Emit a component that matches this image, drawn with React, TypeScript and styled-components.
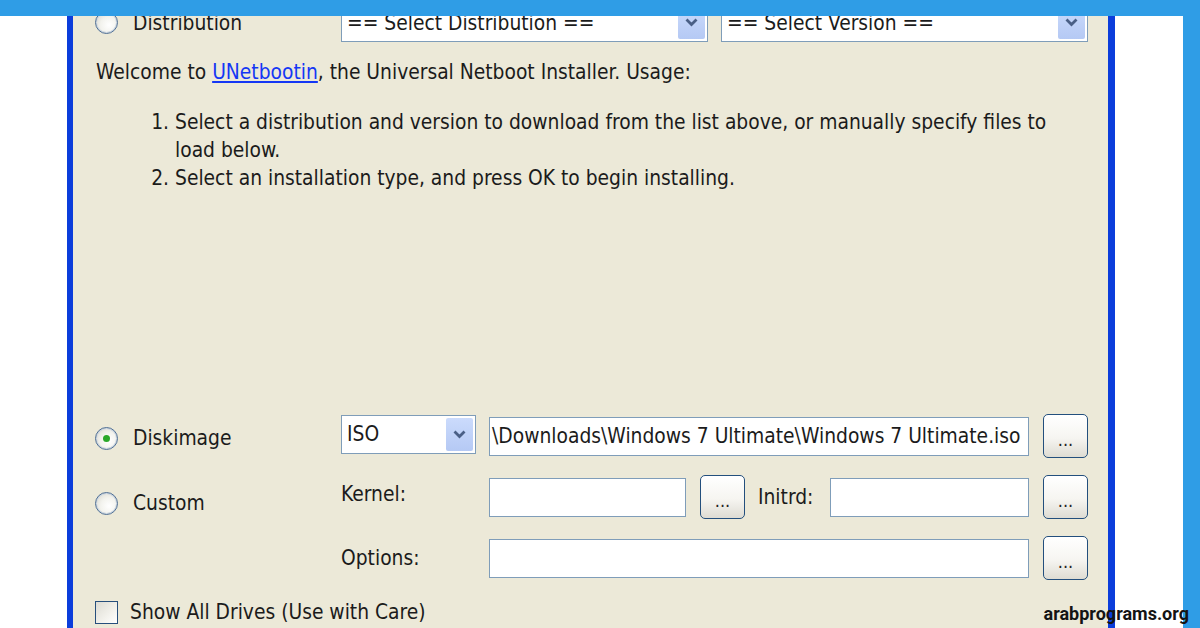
import React from "react";
import styled, { createGlobalStyle } from "styled-components";

const UI_FONT = `"DejaVu Sans Condensed", "DejaVu Sans", sans-serif`;

const Global = createGlobalStyle`
  html, body { margin: 0; padding: 0; background: #ffffff; }
  body { width: 1200px; height: 628px; overflow: hidden; }
`;

const Page = styled.div`
  position: relative;
  width: 1200px;
  height: 628px;
  display: flex;
  flex-direction: column;
  background: #ffffff;
  overflow: hidden;
`;

const TopBand = styled.div`
  flex: none;
  height: 16px;
  background: #2f9de6;
`;

const Stage = styled.div`
  flex: 1;
  min-height: 0;
  display: flex;
`;

const Gutter = styled.div<{ $w: number }>`
  flex: none;
  width: ${(p) => p.$w}px;
  background: #ffffff;
`;

const SideBand = styled.div`
  flex: none;
  width: 17px;
  background: #2f9de6;
`;

const Window = styled.div`
  flex: none;
  width: 1048px;
  box-sizing: border-box;
  border-left: 6px solid #0b3ddb;
  border-right: 7px solid #0b3ddb;
  background: #ece9d8;
  padding: 0 20px 0 22px;
  overflow: hidden;
  font-family: ${UI_FONT};
  font-stretch: condensed;
  font-size: 20.8px;
  color: #1b1b1b;
`;

const TopRow = styled.div`
  margin-top: -13px;
  display: grid;
  grid-template-columns: 233px 367px 367px;
  column-gap: 13px;
  align-items: center;
  height: 39px;
`;

const Choice = styled.label<{ $dy?: number }>`
  display: flex;
  align-items: center;
  gap: 15px;
  white-space: nowrap;
  padding-top: ${(p) => Math.max(0, p.$dy ?? 0)}px;
  padding-bottom: ${(p) => Math.max(0, -(p.$dy ?? 0))}px;
`;

const Radio = styled.span<{ $on?: boolean }>`
  flex: none;
  width: 23px;
  height: 23px;
  box-sizing: border-box;
  border-radius: 50%;
  border: 1.5px solid #4f6f95;
  box-shadow: inset 0 0 0 1px #c9d4df;
  background: radial-gradient(circle at 62% 62%, #ffffff 0%, #f3f3ee 45%, #d3d1c8 100%);
  display: flex;
  align-items: center;
  justify-content: center;
  &::after {
    content: "";
    display: ${(p) => (p.$on ? "block" : "none")};
    width: 7px;
    height: 7px;
    border-radius: 50%;
    background: #2aa82a;
  }
`;

const Check = styled.span`
  flex: none;
  width: 23px;
  height: 23px;
  box-sizing: border-box;
  border: 1.5px solid #274f7c;
  background: linear-gradient(135deg, #dcdbd3 0%, #f1f0ea 55%, #ffffff 100%);
`;

const Combo = styled.div<{ $w?: number; $dy?: number }>`
  height: 39px;
  ${(p) => (p.$w ? `width: ${p.$w}px;` : "")}
  box-sizing: border-box;
  border: 1px solid #7f9db9;
  background: #ffffff;
  padding: 2px;
  display: flex;
  align-items: center;
  margin-top: ${(p) => p.$dy ?? 0}px;
`;

const ComboText = styled.span`
  flex: 1;
  padding-left: 3px;
  white-space: nowrap;
  overflow: hidden;
`;

const ComboButton = styled.span`
  flex: none;
  width: 27px;
  align-self: stretch;
  border-radius: 2px;
  background: linear-gradient(#cbdbfc, #b5c9f4);
  display: flex;
  align-items: center;
  justify-content: center;
`;

const Welcome = styled.p`
  margin: 16px 0 0 1px;
  line-height: 28px;
  white-space: nowrap;
`;

const Link = styled.a`
  color: #1437f5;
  text-decoration: underline;
`;

const Steps = styled.ol`
  margin: 22px 0 0;
  padding-left: 80px;
  line-height: 28px;
  white-space: nowrap;
`;

const Form = styled.div`
  margin-top: 222px;
  display: grid;
  grid-template-columns: 246px 148px 540px 59px;
  grid-auto-rows: 44px;
  row-gap: 17px;
  align-items: center;
`;

const FieldLabel = styled.span<{ $dy?: number }>`
  white-space: nowrap;
  padding-top: ${(p) => Math.max(0, p.$dy ?? 0)}px;
  padding-bottom: ${(p) => Math.max(0, -(p.$dy ?? 0))}px;
`;

const Field = styled.div<{ $w?: number }>`
  height: 39px;
  ${(p) => (p.$w ? `width: ${p.$w}px; flex: none;` : "flex: 1;")}
  box-sizing: border-box;
  border: 1px solid #7f9db9;
  background: #ffffff;
  display: flex;
  align-items: center;
  padding: 0 2px;
  overflow: hidden;
  white-space: nowrap;
`;

const SplitCell = styled.div`
  display: flex;
  align-items: center;
`;

const InlineLabel = styled.span`
  flex: none;
  width: 72px;
  margin-left: 13px;
  white-space: nowrap;
`;

const Browse = styled.button<{ $gap?: number }>`
  flex: none;
  justify-self: end;
  width: 45px;
  height: 44px;
  margin-left: ${(p) => p.$gap ?? 0}px;
  box-sizing: border-box;
  border: 1.5px solid #234f7d;
  border-radius: 5px;
  background: linear-gradient(#ffffff 0%, #f6f5f1 55%, #dedcd3 100%);
  font: inherit;
  font-size: 18px;
  color: #222222;
  padding: 8px 0 0;
  line-height: 1;
`;

const CheckRow = styled.label`
  margin-top: 21px;
  display: flex;
  align-items: center;
  gap: 12px;
  height: 22px;
  white-space: nowrap;
`;

const Watermark = styled.div`
  position: absolute;
  right: 11px;
  bottom: 5px;
  font-family: Roboto, "Liberation Sans", sans-serif;
  font-weight: 700;
  font-size: 18px;
  line-height: 1;
  color: #141414;
`;

const Chevron = () => (
  <svg width="13" height="9" viewBox="0 0 13 9">
    <polyline points="1.5,1.5 6.5,6.5 11.5,1.5" fill="none" stroke="#4a5f86" strokeWidth="2.8" />
  </svg>
);

const Select = ({ label, width, dy }: { label: string; width?: number; dy?: number }) => (
  <Combo $w={width} $dy={dy}>
    <ComboText>{label}</ComboText>
    <ComboButton>
      <Chevron />
    </ComboButton>
  </Combo>
);

export default function App() {
  return (
    <Page>
      <Global />
      <TopBand />
      <Stage>
        <Gutter $w={67} />
        <Window>
          <TopRow>
            <Choice>
              <Radio />
              Distribution
            </Choice>
            <Select label="== Select Distribution ==" />
            <Select label="== Select Version ==" />
          </TopRow>
          <Welcome>
            Welcome to <Link>UNetbootin</Link>, the Universal Netboot Installer. Usage:
          </Welcome>
          <Steps>
            <li>
              Select a distribution and version to download from the list above, or manually specify files to
              <br />
              load below.
            </li>
            <li>Select an installation type, and press OK to begin installing.</li>
          </Steps>
          <Form>
            <Choice $dy={4}>
              <Radio $on />
              Diskimage
            </Choice>
            <Select label="ISO" width={135} dy={-4} />
            <Field>\Downloads\Windows 7 Ultimate\Windows 7 Ultimate.iso</Field>
            <Browse>...</Browse>

            <Choice $dy={12}>
              <Radio />
              Custom
            </Choice>
            <FieldLabel $dy={-6}>Kernel:</FieldLabel>
            <SplitCell>
              <Field $w={197} />
              <Browse $gap={14}>...</Browse>
              <InlineLabel>Initrd:</InlineLabel>
              <Field />
            </SplitCell>
            <Browse>...</Browse>

            <span />
            <FieldLabel>Options:</FieldLabel>
            <Field />
            <Browse>...</Browse>
          </Form>
          <CheckRow>
            <Check />
            Show All Drives (Use with Care)
          </CheckRow>
        </Window>
        <Gutter $w={68} />
        <SideBand />
      </Stage>
      <Watermark>arabprograms.org</Watermark>
    </Page>
  );
}
